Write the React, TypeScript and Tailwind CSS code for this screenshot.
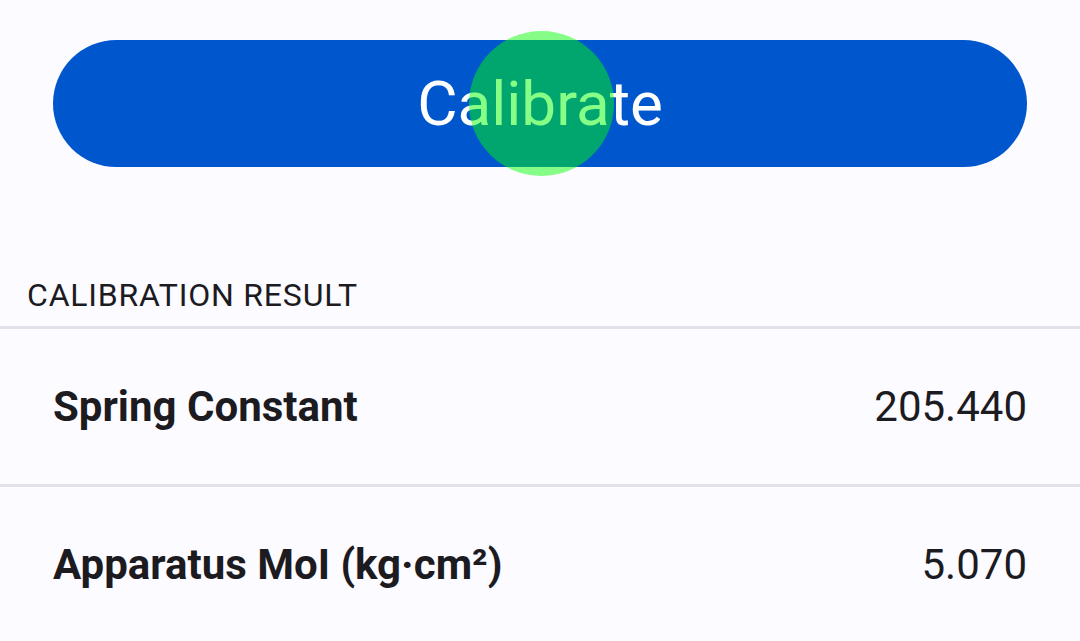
import React from 'react';

const rows = [
  { label: 'Spring Constant', value: '205.440' },
  { label: 'Apparatus MoI (kg·cm²)', value: '5.070' },
];

export default function App() {
  return (
    <div className="h-[641px] w-[1080px] overflow-hidden bg-[#fcfbff] text-[#1c1b1f]" style={{ fontFamily: 'Roboto, "Noto Sans", sans-serif' }}>
      {/* Calibrate button */}
      <div className="px-[53px] pt-[40px]">
        <div className="relative">
          <button className="flex h-[127px] w-full items-center justify-center rounded-full bg-[#0057cd] text-[62px] text-white">
            Calibrate
          </button>
          {/* touch indicator */}
          <div className="pointer-events-none absolute left-[416px] top-[-9px] h-[145px] w-[145px] rounded-full bg-[#00ff00]/[0.47]" />
        </div>
      </div>

      {/* Section header */}
      <div className="flex h-[159px] items-end px-[27px] pb-[7px]">
        <span className="text-[32px] leading-[48px] tracking-[0.8px] uppercase">Calibration Result</span>
      </div>
      <div className="h-[3px] bg-[#e2e2ea]" />

      {rows.map((row, i) => (
        <div key={row.label}>
          <div className="flex h-[155px] items-center justify-between px-[53px]">
            <span className="text-[42px] font-bold">{row.label}</span>
            <span className="text-[42px]">{row.value}</span>
          </div>
          {i < rows.length - 1 && <div className="h-[3px] bg-[#e2e2ea]" />}
        </div>
      ))}
    </div>
  );
}
